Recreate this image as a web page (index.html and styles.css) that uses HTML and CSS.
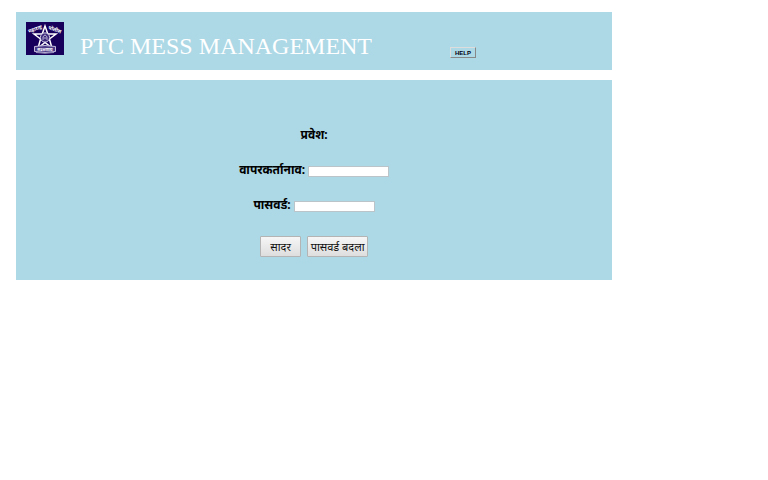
FILE: index.html
```html
<!DOCTYPE html>
<html lang="en">
<head>
<meta charset="utf-8">
<title>PTC MESS MANAGEMENT</title>
<link rel="stylesheet" href="styles.css">
</head>
<body>
<header class="banner">
  <svg class="logo" viewBox="0 0 38 33" aria-hidden="true">
    <rect width="38" height="33" fill="#17005c"/>
    <path d="M19 4 21.8 12H30L23.4 17 26 26 19 20.5 12 26 14.6 17 8 12H16.2Z" fill="#17005c" stroke="#fff" stroke-width="1.5"/>
    <circle cx="19" cy="15.5" r="4.6" fill="#39257a" stroke="#d8d4e8" stroke-width="1"/>
    <path d="M17 18V15Q19 11 21 15V18M17.5 16H20.5" fill="none" stroke="#d8d4e8" stroke-width=".8"/>
    <path d="M8.5 24.5Q19 22.5 29.5 24.5V29.5Q19 31.5 8.5 29.5Z" fill="#4a3a88" stroke="#c5bfdc" stroke-width="1"/>
    <path d="M10 30.5Q19 32 28 30.5" fill="none" stroke="#9990bd"/>
    <text class="logo-text" transform="translate(3 11) rotate(-20)">महाराष्ट्र</text>
    <text class="logo-text" transform="translate(22 7) rotate(20)">पोलीस</text>
    <text class="logo-motto" x="19" y="28.5" text-anchor="middle">सद्रक्षणाय</text>
  </svg>
  <h1 class="title">PTC MESS MANAGEMENT</h1>
  <button class="help" type="button">HELP</button>
</header>
<main class="panel">
  <form class="login">
    <h2 class="heading">प्रवेश:</h2>
    <div class="field">
      <label for="user">वापरकर्तानाव:</label>
      <input id="user" type="text">
    </div>
    <div class="field">
      <label for="pass">पासवर्ड:</label>
      <input id="pass" type="password">
    </div>
    <div class="actions">
      <button class="btn" type="submit">सादर</button>
      <button class="btn btn-wide" type="button">पासवर्ड बदला</button>
    </div>
  </form>
</main>
</body>
</html>
```
FILE: styles.css
```css
* { box-sizing: border-box; }
body {
  margin: 0;
  padding: 12px 16px;
  background: #fff;
  color: #000;
  font-family: "Noto Sans", "Noto Sans Devanagari", sans-serif;
}
.banner, .panel {
  width: 81%;
  background: #add8e6;
}
.banner {
  display: flex;
  align-items: flex-start;
  padding: 10px;
  margin-bottom: 10px;
}
.logo { width: 38px; height: 33px; margin-right: 16px; }
.logo-text { font-size: 5px; font-weight: bold; fill: #fff; }
.logo-motto { font-size: 4px; font-weight: bold; fill: #fff; }
.title {
  margin: 10px 78px 0 0;
  font: 24px/28px "Liberation Serif", serif;
  white-space: nowrap;
  color: #fff;
}
.help {
  width: 26px;
  height: 11px;
  margin-top: 25px;
  padding: 0;
  border: 1px solid;
  border-color: #ddd #888 #888 #ddd;
  background: #add8e6;
  color: #001;
  font: bold 6px/8px "Liberation Sans", sans-serif;
}
.login {
  display: flex;
  flex-direction: column;
  align-items: center;
  gap: 15px;
  padding: 45px 0 23px;
}
.heading, .field {
  margin: 0;
  font-size: 12px;
  line-height: 20px;
  font-weight: bold;
}
.field { display: flex; align-items: center; gap: 3px; }
.field input {
  width: 81px;
  height: 11px;
  margin-top: 2px;
  padding: 0 2px;
  border: 1px solid #bbc4c8;
  background: #fff;
  font-size: 8px;
}
.actions { display: flex; gap: 6px; margin-top: 6px; }
.btn {
  width: 41px;
  height: 21px;
  padding: 0;
  border: 1px solid #b4b4b4;
  border-radius: 1px;
  background: linear-gradient(#f6f6f6, #dedede);
  color: #111;
  font-family: inherit;
  font-size: 11px;
  line-height: 19px;
  white-space: nowrap;
}
.btn-wide { width: 61px; }
```
